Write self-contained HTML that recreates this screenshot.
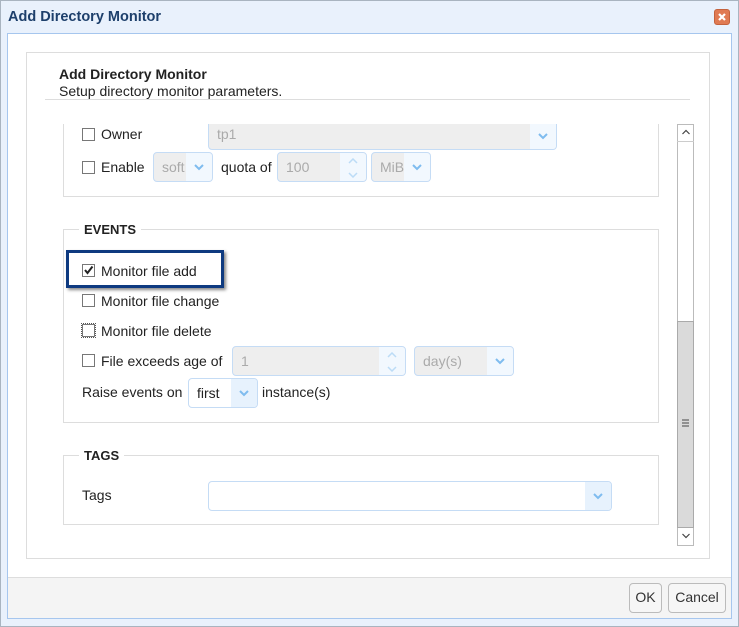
<!DOCTYPE html>
<html><head><style>
*{box-sizing:border-box}
body{margin:0;width:739px;height:627px;position:relative;background:#fff;font-family:"Liberation Sans",sans-serif;font-size:14px;color:#222;overflow:hidden}
.a{position:absolute}
.cb{position:absolute;width:13px;height:13px;border:1px solid #777;background:#fff}
.inp{position:absolute;background:#eee;border:1px solid #c5dcf5;border-radius:4px;color:#aaa;font-size:14px;padding:0 0 0 8px;line-height:28px;overflow:hidden}
.dd{position:absolute;right:0;top:0;bottom:0;width:26px;background:#f2f8fe;border-left:none}
.dd svg{position:absolute;left:8px;top:11px}
.fs{position:absolute;border:1px solid #ddd}
.lg{position:absolute;background:#fff;font-weight:bold;font-size:13px;padding:0 5px}
.btn{position:absolute;border:1px solid #bbb;border-radius:4px;background:#f6f6f6;font-size:14px;text-align:center;line-height:27px;color:#333}
</style></head><body>
<div class="a" style="left:0;top:0;width:739px;height:627px;border:1px solid #a9b4c0;background:#e9f1fc"></div>
<div class="a" style="left:8px;top:9px;font-weight:bold;font-size:14.5px;color:#1d3f6b">Add Directory Monitor</div>
<div class="a" style="left:714px;top:9px;width:16px;height:16px;border-radius:3px;background:#e07a52;border:1px solid #c4623d"><svg width="14" height="14" style="position:absolute;left:0;top:0"><path d="M4 4L10 10M10 4L4 10" stroke="#fff" stroke-width="2.2"/></svg></div>
<div class="a" style="left:7px;top:33px;width:725px;height:586px;border:1px solid #a6c6ee;background:#fff"></div>
<div class="a" style="left:8px;top:577px;width:723px;height:41px;background:#f4f4f4;border-top:1px solid #ddd"></div>
<div class="btn" style="left:629px;top:583px;width:33px;height:30px">OK</div>
<div class="btn" style="left:668px;top:583px;width:58px;height:30px">Cancel</div>
<div class="a" style="left:26px;top:52px;width:684px;height:507px;border:1px solid #ddd"></div>
<div class="a" style="left:59px;top:66px;font-weight:bold;font-size:14px">Add Directory Monitor</div>
<div class="a" style="left:59px;top:83px;font-size:14px">Setup directory monitor parameters.</div>
<div class="a" style="left:45px;top:99px;width:645px;height:1px;background:#ddd"></div>

<div class="fs" style="left:63px;top:110px;width:596px;height:87px;border-top:none"></div>
<div class="inp" style="left:208px;top:110px;width:349px;height:40px;line-height:46px">tp1<div class="dd"><svg width="10" height="7" style="top:22px"><path d="M1 1L5 5L9 1" stroke="#7fbcef" stroke-width="2" fill="none"/></svg></div></div>
<div class="a" style="left:60px;top:100px;width:610px;height:24px;background:#fff"></div>
<div class="cb" style="left:82px;top:128px"></div><div class="a" style="left:101px;top:126px">Owner</div>
<div class="cb" style="left:82px;top:161px"></div><div class="a" style="left:101px;top:159px">Enable</div>
<div class="inp" style="left:153px;top:152px;width:60px;height:30px">soft<div class="dd"><svg width="10" height="7"><path d="M1 1L5 5L9 1" stroke="#7fbcef" stroke-width="2" fill="none"/></svg></div></div>
<div class="a" style="left:221px;top:159px">quota of</div>
<div class="inp" style="left:277px;top:152px;width:90px;height:30px">100<div class="dd" style="width:26px"><svg width="10" height="20" style="left:8px;top:5px"><path d="M1 5L5 1L9 5M1 15L5 19L9 15" stroke="#bcdcf6" stroke-width="1.5" fill="none"/></svg></div></div>
<div class="inp" style="left:371px;top:152px;width:60px;height:30px">MiB<div class="dd"><svg width="10" height="7"><path d="M1 1L5 5L9 1" stroke="#7fbcef" stroke-width="2" fill="none"/></svg></div></div>

<div class="fs" style="left:63px;top:229px;width:596px;height:194px"></div>
<div class="lg" style="left:79px;top:222px">EVENTS</div>
<div class="a" style="left:66px;top:250px;width:158px;height:38px;border:3px solid #0e3a80;box-shadow:2px 2px 3px #888;background:#fff"></div>
<div class="cb" style="left:82px;top:264px"><svg width="11" height="11" style="position:absolute;left:0;top:0"><path d="M2 5L4.5 8L9.5 1.5" stroke="#222" stroke-width="2" fill="none"/></svg></div>
<div class="a" style="left:101px;top:263px">Monitor file add</div>
<div class="cb" style="left:82px;top:294px"></div><div class="a" style="left:101px;top:293px">Monitor file change</div>
<div class="cb" style="left:82px;top:324px;outline:1px dotted #555;outline-offset:0px"></div><div class="a" style="left:101px;top:323px">Monitor file delete</div>
<div class="cb" style="left:82px;top:354px"></div><div class="a" style="left:101px;top:353px">File exceeds age of</div>
<div class="inp" style="left:232px;top:346px;width:174px;height:30px">1<div class="dd"><svg width="10" height="20" style="left:8px;top:5px"><path d="M1 5L5 1L9 5M1 15L5 19L9 15" stroke="#bcdcf6" stroke-width="1.5" fill="none"/></svg></div></div>
<div class="inp" style="left:414px;top:346px;width:100px;height:30px">day(s)<div class="dd"><svg width="10" height="7"><path d="M1 1L5 5L9 1" stroke="#7fbcef" stroke-width="2" fill="none"/></svg></div></div>
<div class="a" style="left:82px;top:384px">Raise events on</div>
<div class="inp" style="left:188px;top:378px;width:70px;height:30px;background:#fff;color:#222">first<div class="dd" style="background:#e7f2fd"><svg width="10" height="7"><path d="M1 1L5 5L9 1" stroke="#7fbcef" stroke-width="2" fill="none"/></svg></div></div>
<div class="a" style="left:262px;top:384px">instance(s)</div>

<div class="fs" style="left:63px;top:455px;width:596px;height:70px"></div>
<div class="lg" style="left:79px;top:448px">TAGS</div>
<div class="a" style="left:82px;top:487px">Tags</div>
<div class="inp" style="left:208px;top:481px;width:404px;height:30px;background:#fff"><div class="dd" style="background:#e7f2fd"><svg width="10" height="7"><path d="M1 1L5 5L9 1" stroke="#7fbcef" stroke-width="2" fill="none"/></svg></div></div>

<div class="a" style="left:677px;top:124px;width:17px;height:422px;border:1px solid #bbb;background:#fff"></div>
<div class="a" style="left:677px;top:141px;width:17px;height:1px;background:#ccc"></div>
<svg class="a" style="left:681px;top:128px" width="10" height="8"><path d="M1.5 6L5 2.5L8.5 6" stroke="#444" stroke-width="1.2" fill="none"/></svg>
<div class="a" style="left:677px;top:321px;width:17px;height:207px;background:#dadada;border:1px solid #aaa"></div>
<svg class="a" style="left:682px;top:419px" width="8" height="9"><path d="M0 1H7M0 4H7M0 7H7" stroke="#666" stroke-width="1.3"/></svg>
<svg class="a" style="left:681px;top:532px" width="10" height="8"><path d="M1.5 2L5 5.5L8.5 2" stroke="#444" stroke-width="1.2" fill="none"/></svg>
</body></html>
